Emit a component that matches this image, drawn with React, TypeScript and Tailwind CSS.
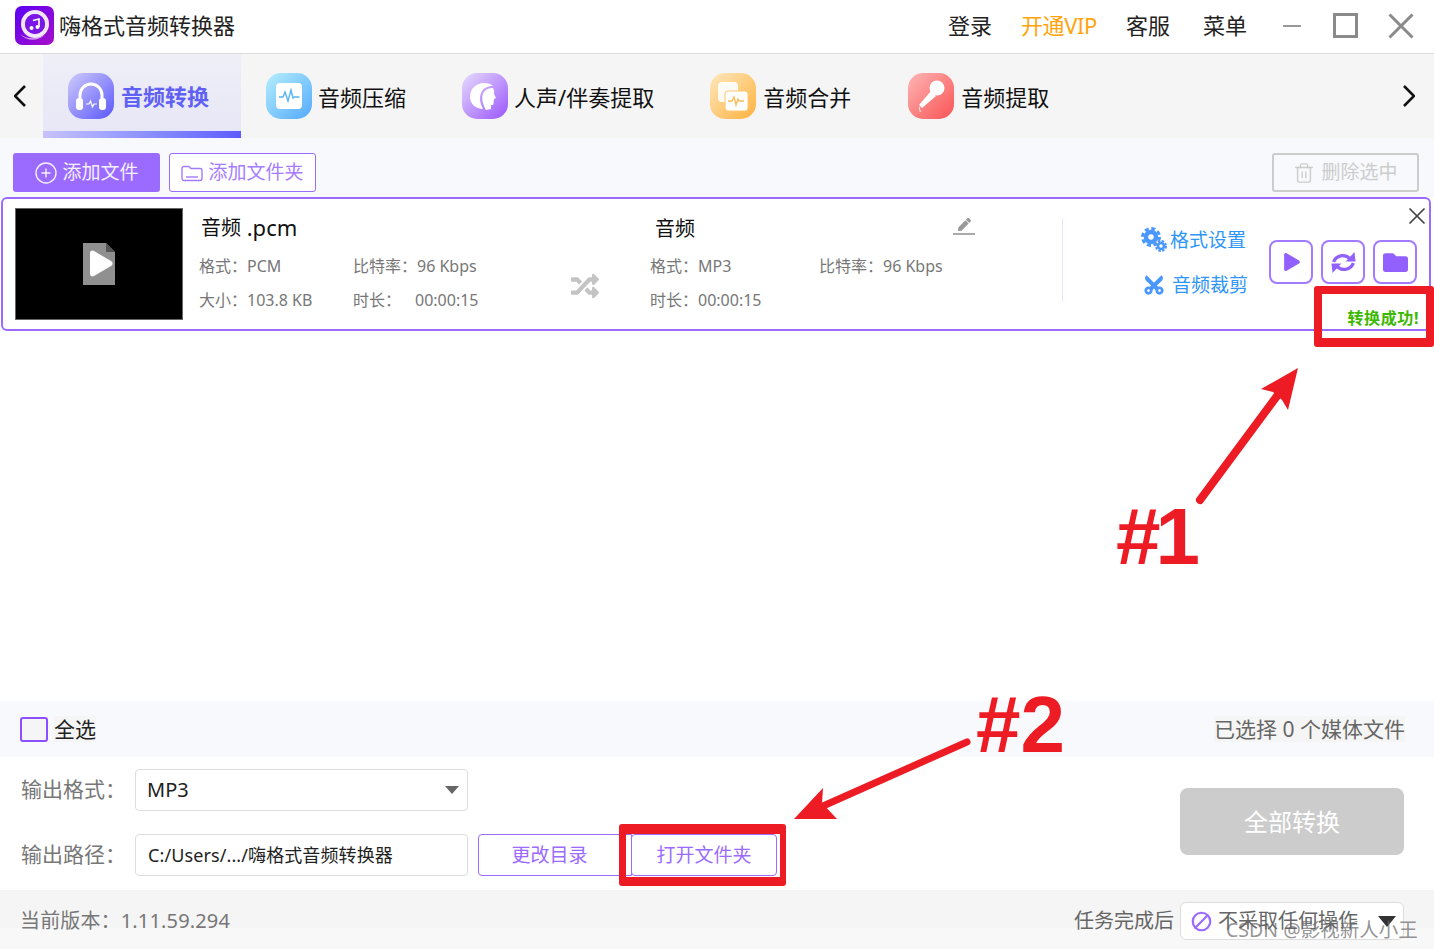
import type { ReactNode } from 'react';
import { CirclePlus, Ban, Trash2, X } from 'lucide-react';
import { FaCut, FaRandom, FaFolder, FaPlay, FaPen } from 'react-icons/fa';

const FONT = "font-['Noto_Sans','Noto_Sans_CJK_SC',sans-serif]";

function Logo() {
  return (
    <svg width="39" height="39" viewBox="0 0 39 39">
      <defs>
        <linearGradient id="logo" x1="0" y1="0" x2="1" y2="1">
          <stop offset="0" stopColor="#5a00f5" />
          <stop offset="1" stopColor="#a80fc8" />
        </linearGradient>
      </defs>
      <rect width="39" height="39" rx="7" fill="url(#logo)" />
      <circle cx="20" cy="18" r="12" fill="none" stroke="#fff" strokeOpacity="0.9" strokeWidth="4" />
      <circle cx="20" cy="18" r="10" fill="#7a17e8" />
      <path d="M5 28c6 5 16 6 25 1-8 7-19 6-25-1z" fill="#fff" fillOpacity="0.6" />
      <path d="M18 14.500l6-1.500v8" fill="none" stroke="#fff" strokeWidth="1.600" />
      <circle cx="16.500" cy="22" r="2" fill="#fff" />
      <circle cx="22.500" cy="21" r="2" fill="#fff" />
    </svg>
  );
}

function Squircle({ id, from, to, children }: { id: string; from: string; to: string; children: ReactNode }) {
  return (
    <svg width="46" height="46" viewBox="0 0 46 46" className="shrink-0">
      <defs>
        <linearGradient id={id} x1="0" y1="0" x2="1" y2="1">
          <stop offset="0" stopColor={from} />
          <stop offset="1" stopColor={to} />
        </linearGradient>
      </defs>
      <rect width="46" height="46" rx="15" fill={`url(#${id})`} />
      {children}
    </svg>
  );
}

function TabIcon({ kind }: { kind: string }) {
  if (kind === 'convert') {
    return (
      <Squircle id="t1" from="#cfcbfb" to="#5b57fb">
        <path d="M12 25v-3a11 11 0 0 1 22 0v3" fill="none" stroke="#fff" strokeWidth="3" />
        <rect x="8" y="25" width="7" height="12" rx="3" fill="#fff" />
        <rect x="31" y="25" width="7" height="12" rx="3" fill="#fff" />
        <path d="M18 31h3l1.500-3 2 6 1.500-3h3" fill="none" stroke="#fff" strokeWidth="1.200" />
      </Squircle>
    );
  }
  if (kind === 'compress') {
    return (
      <Squircle id="t2" from="#b5effd" to="#53a9fb">
        <rect x="10" y="10" width="26" height="26" rx="4" fill="#fff" />
        <path d="M13 24h4l2-5 3 9 3-11 2 8 1.500-1h5" fill="none" stroke="#56b4f8" strokeWidth="1.400" />
      </Squircle>
    );
  }
  if (kind === 'vocal') {
    return (
      <Squircle id="t3" from="#e6dcfd" to="#9a55fb">
        <path d="M8 24C8 15 15 10 22 10c4 0 7 1 9 3-6 0-10 2-12 7-2 5-1 10 2 16-7 0-13-5-13-12z" fill="#fff" />
        <path d="M31 15c-5 0-8.500 2-10 6-1.500 4-.5 10 3 16l5-1v-4h2c1-2 .5-4 1-6l2-1-2-4c.5-2 0-4-1-6z" fill="#fff" />
      </Squircle>
    );
  }
  if (kind === 'merge') {
    return (
      <Squircle id="t4" from="#fee8bd" to="#feb23f">
        <rect x="8" y="9" width="20" height="20" rx="4" fill="#fff" fillOpacity="0.9" />
        <rect x="15" y="18" width="23" height="20" rx="3" fill="#fff" stroke="#fec870" />
        <path d="M18 28h4l2-4 2 8 2-6 1 2h5" fill="none" stroke="#fdbb58" strokeWidth="1.400" />
      </Squircle>
    );
  }
  return (
    <Squircle id="t5" from="#feb6b6" to="#f95353">
      <circle cx="29" cy="15" r="7.500" fill="#fff" />
      <path d="M23 18l5 5-14 12-3-3z" fill="#fff" />
      <path d="M12 34c-2 2 1 3 0 5" fill="none" stroke="#fff" strokeWidth="1" />
    </Squircle>
  );
}

function GearsIcon() {
  return (
    <svg width="26" height="26" viewBox="0 0 26 26" fill="none" stroke="#4a98ff" className="shrink-0">
      <circle cx="10" cy="10" r="5" strokeWidth="4.500" />
      <circle cx="10" cy="10" r="8.500" strokeWidth="3" strokeDasharray="4 2.680" />
      <circle cx="20" cy="19" r="3" strokeWidth="2.500" />
      <circle cx="20" cy="19" r="5" strokeWidth="2" strokeDasharray="2.500 1.430" />
    </svg>
  );
}

function RefreshIcon() {
  return (
    <svg width="27" height="23" viewBox="0 0 24 21" fill="#9160ff">
      <path d="M3 10C5 4 13 2 18 7" fill="none" stroke="#9160ff" strokeWidth="3" />
      <polygon points="14,9.500 23,9.500 22,1" />
      <path d="M21 11C19 17 11 19 6 14" fill="none" stroke="#9160ff" strokeWidth="3" />
      <polygon points="10,11.500 1,11.500 2,20" />
    </svg>
  );
}

function Chevron({ right }: { right?: boolean }) {
  return (
    <svg width="12" height="22" viewBox="0 0 12 22" fill="none" stroke="#111" strokeWidth="2.600">
      <path d={right ? 'M1 1l10 10L1 21' : 'M11 1L1 11l10 10'} />
    </svg>
  );
}

const TABS = [
  { kind: 'compress', label: '音频压缩', cls: 'gap-[6px] pr-[31px]' },
  { kind: 'vocal', label: '人声/伴奏提取', cls: 'gap-[6px] pr-[31px]' },
  { kind: 'merge', label: '音频合并', cls: 'gap-[7px] pr-[32px]' },
  { kind: 'extract', label: '音频提取', cls: 'gap-[7px] pr-[31px]' },
];

function InfoRow({ left, right, leftWidth }: { left: string; right?: ReactNode; leftWidth: string }) {
  return (
    <div className="flex h-[34px] items-center whitespace-pre text-base text-[#777]">
      <span className={leftWidth}>{left}</span>
      {right && <span>{right}</span>}
    </div>
  );
}

export default function App() {
  return (
    <div className={`${FONT} relative flex h-[949px] w-[1434px] flex-col overflow-hidden bg-white`}>
      {/* title bar */}
      <header className="flex h-[54px] shrink-0 items-center border-b border-[#dcdcdc] pb-[2px] pl-[15px]">
        <Logo />
        <span className="ml-[5px] text-[22px] text-[#222]">嗨格式音频转换器</span>
        <nav className="ml-auto flex items-center text-[22px] text-[#222]">
          <span>登录</span>
          <span className="ml-[29px] tracking-[-0.4px] text-[#ffa40d]">开通VIP</span>
          <span className="ml-[29px]">客服</span>
          <span className="ml-[33px]">菜单</span>
        </nav>
        <div className="ml-[36px] mr-[20px] flex items-center">
          <div className="h-[2px] w-[18px] bg-[#999]" />
          <div className="ml-[32px] h-[25px] w-[25px] border-[3px] border-[#8a8a8a]" />
          <svg width="26" height="26" viewBox="0 0 26 26" stroke="#8a8a8a" strokeWidth="3" className="ml-[30px]">
            <path d="M1.500 1.500l23 23M24.500 1.500l-23 23" />
          </svg>
        </div>
      </header>

      {/* feature tabs */}
      <div className="flex h-[84px] shrink-0 items-stretch bg-[#f5f5f5]">
        <div className="flex w-[43px] items-center pl-[14px]">
          <Chevron />
        </div>
        <div className="flex w-[198px] flex-col bg-gradient-to-b from-[#efeff8] to-[#e6e6f6]">
          <div className="flex flex-1 items-center gap-[7px] pl-[25px] pt-[7px]">
            <TabIcon kind="convert" />
            <span className="text-[22px] font-bold text-[#6160f5]">音频转换</span>
          </div>
          <div className="h-[7px] bg-gradient-to-r from-[#c7c2fd] to-[#5f5bff]" />
        </div>
        {TABS.map((tab) => (
          <div key={tab.kind} className={`flex items-center pl-[25px] ${tab.cls}`}>
            <TabIcon kind={tab.kind} />
            <span className="pt-[2px] text-[22px] text-[#111]">{tab.label}</span>
          </div>
        ))}
        <div className="ml-auto flex items-center pr-[19px]">
          <Chevron right />
        </div>
      </div>

      {/* toolbar */}
      <div className="flex h-[59px] shrink-0 items-start bg-[#f8f9fc] pl-[13px] pr-[15px] pt-[15px] text-[19px]">
        <button className="flex h-[39px] w-[147px] items-center justify-center gap-[4px] rounded-[3px] bg-[#9b6bff] text-white/90">
          <CirclePlus size={24} strokeWidth={1.4} />
          添加文件
        </button>
        <button className="ml-[9px] flex h-[39px] w-[147px] items-center justify-center gap-[5px] rounded-[3px] border border-[#9b6bff] bg-white text-[#a67cff]">
          <svg width="22" height="18" viewBox="0 0 22 18" fill="none" stroke="#a67cff" strokeWidth="1.400">
            <path d="M1 4.500a2 2 0 0 1 2-2h5l2 2h9a2 2 0 0 1 2 2v8a2 2 0 0 1-2 2H3a2 2 0 0 1-2-2z" />
            <path d="M5 13h12" />
          </svg>
          添加文件夹
        </button>
        <button className="ml-auto flex h-[39px] w-[147px] items-center justify-center gap-[6px] rounded-[3px] border-2 border-[#ccc] text-[#ccc]">
          <Trash2 size={22} strokeWidth={1.5} />
          删除选中
        </button>
      </div>

      {/* file row */}
      <div className="relative ml-px flex h-[134px] w-[1430px] shrink-0 rounded-[6px] border-2 border-[#9b6bff] bg-white pl-3 pt-[9px]">
        <div className="flex h-[112px] w-[168px] shrink-0 items-center justify-center border border-[#666] bg-black">
          <svg width="32" height="42" viewBox="0 0 32 42">
            <path d="M0 0h23l9 9v33H0z" fill="#909090" />
            <path d="M23 0l9 9h-9z" fill="#555" />
            <path d="M7 10c0-2 2-3 4-2l17 10c2 1 2 4 0 5L11 33c-2 1-4 0-4-2z" fill="#fff" />
          </svg>
        </div>

        <div className="ml-4 w-[372px] shrink-0">
          <div className="flex h-[41px] items-center whitespace-pre pb-[2px] pl-[2px] text-xl text-[#111]">
            音频<span className="text-[22px]"> .pcm</span>
          </div>
          <InfoRow left="格式：PCM" right="比特率：96 Kbps" leftWidth="w-[154px]" />
          <InfoRow
            left="大小：103.8 KB"
            right={
              <>
                时长：<span className="ml-[14px]">00:00:15</span>
              </>
            }
            leftWidth="w-[154px]"
          />
        </div>

        <div className="w-[28px] shrink-0 pt-[64px] text-[#c4c4c4]">
          <FaRandom size={28} />
        </div>

        <div className="ml-[51px] w-[325px] shrink-0">
          <div className="flex h-[41px] items-center justify-between pl-[5px] text-xl text-[#111]">
            <span>音频</span>
            <span className="-mt-[4px] flex flex-col items-center text-[#999]">
              <FaPen size={13} />
              <span className="mt-[2px] h-[2px] w-[22px] bg-[#aaa]" />
            </span>
          </div>
          <InfoRow left="格式：MP3" right="比特率：96 Kbps" leftWidth="w-[169px]" />
          <InfoRow left="时长：00:00:15" leftWidth="w-[169px]" />
        </div>

        <div className="ml-[87px] mt-[10px] h-[84px] w-px shrink-0 bg-[#e8e4f5]" />

        <div className="ml-[78px] mt-[17px] flex w-[107px] shrink-0 flex-col gap-[15px] text-[19px] text-[#2f96f5]">
          <div className="flex h-[30px] items-center gap-[3px]">
            <GearsIcon />
            <span className="whitespace-nowrap">格式设置</span>
          </div>
          <div className="flex h-[30px] items-center gap-[7px] pl-[2px]">
            <FaCut size={22} className="shrink-0 -rotate-90 text-[#4a98ff]" />
            <span className="whitespace-nowrap">音频裁剪</span>
          </div>
        </div>

        <div className="ml-[21px] mt-[32px] flex gap-2 text-[#9160ff]">
          <div className="flex h-[44px] w-[44px] items-center justify-center rounded-[8px] border-2 border-[#a27bff]">
            <FaPlay size={18} className="ml-[2px]" />
          </div>
          <div className="flex h-[44px] w-[44px] items-center justify-center rounded-[8px] border-2 border-[#a27bff]">
            <RefreshIcon />
          </div>
          <div className="flex h-[44px] w-[44px] items-center justify-center rounded-[8px] border-2 border-[#a27bff]">
            <FaFolder size={25} />
          </div>
        </div>

        <X size={28} strokeWidth={1.5} className="absolute right-[-2px] top-[3px] text-[#444]" />
        <span className="absolute right-[10px] top-[107px] text-base font-bold tracking-[0.6px] text-[#3cb800]">转换成功!</span>
      </div>

      <div className="flex-1 bg-white" />

      {/* select all */}
      <div className="flex h-[56px] shrink-0 items-center bg-[#f8f9fc] pl-5 pr-[29px] text-[21px]">
        <div className="h-[25px] w-[28px] rounded-[3px] border-2 border-[#8c4fff] bg-[#f5f5f5]" />
        <span className="ml-[6px] bg-[#f5f5f5] pt-px leading-[25px] text-[#222]">全选</span>
        <span className="ml-auto bg-[#f5f5f5] pt-px leading-[25px] text-[#666]">已选择 0 个媒体文件</span>
      </div>

      {/* output settings */}
      <div className="flex h-[133px] shrink-0 bg-white pl-[21px] pr-[30px]">
        <div className="flex flex-col gap-[23px] pt-3">
          <div className="flex items-center">
            <span className="w-[114px] whitespace-nowrap text-[21px] text-[#777]">输出格式：</span>
            <div className="flex h-[42px] w-[333px] items-center justify-between rounded-[4px] border border-[#ddd] pl-[11px] pr-[8px] text-xl text-[#222]">
              MP3
              <span className="h-0 w-0 border-x-[7px] border-t-[8px] border-x-transparent border-t-[#666]" />
            </div>
          </div>
          <div className="flex items-center">
            <span className="w-[114px] whitespace-nowrap text-[21px] text-[#777]">输出路径：</span>
            <div className="flex h-[42px] w-[333px] items-center rounded-[4px] border border-[#ddd] pl-3 text-[18px] tracking-[0.1px] text-[#222]">
              C:/Users/.../嗨格式音频转换器
            </div>
            <button className="ml-[10px] h-[42px] w-[154px] rounded-l-[4px] border border-[#9b6bff] pr-[11px] text-[19px] text-[#9b6bff]">
              更改目录
            </button>
            <button className="-ml-px h-[42px] w-[146px] rounded-[4px] border border-[#9b6bff] bg-white text-[19px] text-[#9b6bff]">
              打开文件夹
            </button>
          </div>
        </div>
        <button className="ml-auto mt-[31px] h-[67px] w-[224px] rounded-[8px] bg-[#ccc] pt-px text-2xl text-white">全部转换</button>
      </div>

      {/* footer */}
      <footer className="flex h-[59px] shrink-0 items-start bg-[linear-gradient(#f5f5f5_38px,#f8f8f8_38px)] pl-[20px] pr-[30px] pt-[12px]">
        <span className="pt-[5px] text-xl tracking-[0.15px] text-[#777]">当前版本：1.11.59.294</span>
        <span className="ml-auto pt-[5px] text-xl text-[#666]">任务完成后</span>
        <div className="ml-[6px] flex h-[38px] w-[224px] items-center rounded-[6px] border border-[#ddd] bg-white pl-[10px] text-xl text-[#666]">
          <Ban size={21} strokeWidth={2.5} className="-scale-x-100 text-[#9b6bff]" />
          <span className="ml-[6px]">不采取任何操作</span>
          <span className="ml-[20px] h-0 w-0 border-x-[9px] border-t-[11px] border-x-transparent border-t-[#333]" />
        </div>
      </footer>

      {/* annotations on top of the screenshot */}
      <div className="absolute left-[1314px] top-[286px] h-[61px] w-[120px] rounded-[3px] border-x-[8px] border-b-[9px] border-t-[8px] border-[#ed1c24]" />
      <div className="absolute left-[619px] top-[824px] h-[62px] w-[167px] rounded-[3px] border-b-[9px] border-l-[7px] border-r-[6px] border-t-[10px] border-[#ed1c24]" />
      <svg className="pointer-events-none absolute left-0 top-0" width="1434" height="949">
        <path d="M1200 500L1277 396" stroke="#ed1c24" strokeWidth="8" strokeLinecap="round" />
        <polygon points="1298,368 1261,389 1273,392 1282,400 1288,410" fill="#ed1c24" />
        <path d="M967 742L823 806" stroke="#ed1c24" strokeWidth="7" strokeLinecap="round" />
        <polygon points="794,819 823,788 822,803 837,819" fill="#ed1c24" />
      </svg>
      <span className="absolute left-[1116px] top-[497px] font-['Liberation_Sans',sans-serif] text-[80px] font-bold leading-none tracking-[-5px] text-[#ed1c24]">#1</span>
      <span className="absolute left-[976px] top-[685px] font-['Liberation_Sans',sans-serif] text-[80px] font-bold leading-none text-[#ed1c24]">#2</span>
      <span className="absolute left-[1226px] top-[915px] text-[19.5px] text-[#666]/70">CSDN @影视新人小王</span>
    </div>
  );
}
